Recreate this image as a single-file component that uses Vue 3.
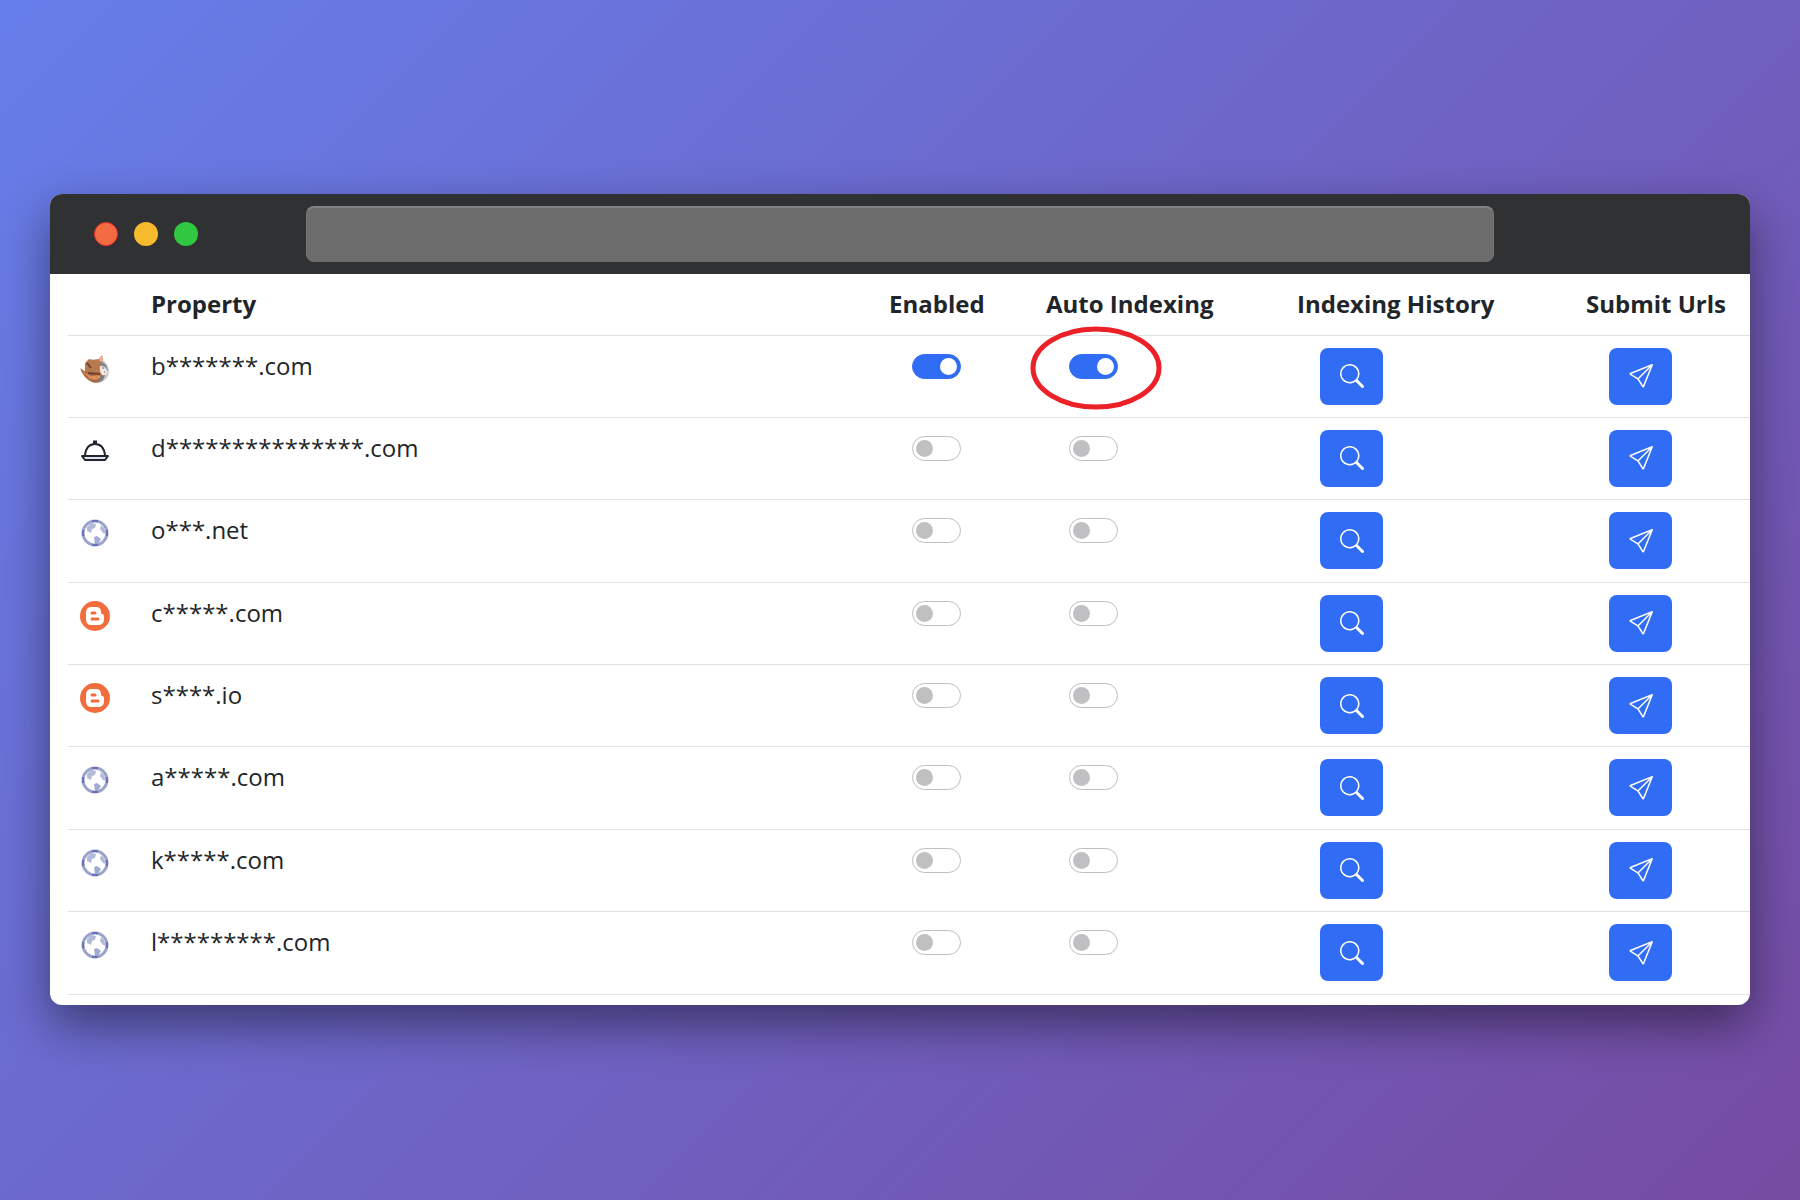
<template>
    <main class="page">
        <section class="window">
            <header class="titlebar">
                <div class="dots">
                    <span class="dot red"></span>
                    <span class="dot yellow"></span>
                    <span class="dot green"></span>
                </div>
                <input class="address" type="text" aria-label="Address">
            </header>

            <div class="content">
                <table>
                    <colgroup>
                        <col class="col-icon">
                        <col>
                        <col class="col-enabled">
                        <col class="col-auto">
                        <col class="col-history">
                        <col class="col-submit">
                    </colgroup>
                    <thead>
                        <tr>
                            <th></th>
                            <th>Property</th>
                            <th>Enabled</th>
                            <th>Auto Indexing</th>
                            <th>Indexing History</th>
                            <th>Submit Urls</th>
                        </tr>
                    </thead>
                    <tbody>
                        <tr v-for="site in sites" :key="site.name">
                            <td class="icon-cell">
                                <!-- fox -->
                                <svg v-if="site.icon === 'fox'" class="favicon" viewBox="0 0 30 30">
                                    <circle cx="17" cy="17" r="12" fill="#c9cdd3" />
                                    <path d="M5 9 9 5l5 1 5-1 3-4 1 5-2 5 2 9-3 8-7 0-7-5-5-6 4 1z" fill="#b87a4c" />
                                    <path d="M0 14q8 7 20 6l6-1-3 7q-5 4-11 2Q4 25 0 14z" fill="#a8683f" />
                                    <path d="m2 17 9 5 9-1-3 5-7-1z" fill="#d98b58" />
                                    <path d="m7 9 4 5M8 19l12 1" fill="none" stroke="#6f4038" stroke-width="2" />
                                    <path d="m19 6 3-5 1 6 4 4-4-1z" fill="#e9b592" />
                                    <path d="m21 7 5 4 2 6-3-4-5-2z" fill="#7b8794" />
                                    <path d="M20 12q6 0 7 6-1 5-5 3-3-4-2-9z" fill="#e6eaed" />
                                    <path d="m20 23 5-2-3 5-5 2z" fill="#76808a" />
                                    <path d="M22 14h2M24 18h1M13 24h2M18 23h2" stroke="#e39a68" stroke-width="2" />
                                </svg>
                                <!-- serving dish -->
                                <svg v-else-if="site.icon === 'dish'" class="favicon" viewBox="0 0 30 30" fill="none" stroke="#20242d" stroke-width="2">
                                    <path d="M5 19C6 11 10 8 15 8s9 3 10 11" />
                                    <path d="M2 20h26l-3 4H5z" fill="#dfe3ee" stroke-linejoin="round" />
                                    <path d="M2 20h26" stroke-width="2" />
                                    <path d="M13 6h4M15 5v3" stroke-width="3" />
                                </svg>
                                <!-- globe -->
                                <svg v-else-if="site.icon === 'globe'" class="favicon" viewBox="0 0 30 30">
                                    <circle cx="15" cy="15" r="12" fill="#fff" />
                                    <path d="m7 9 4-4 5 1-1 4-3 1-1 4-4-2z" fill="#b3bad8" />
                                    <path d="m21 7 3 3 2 6-3-1-3-4z" fill="#b3bad8" />
                                    <path d="m14 19 3-1 4 3-3 5h-3z" fill="#a3abd2" />
                                    <circle cx="15" cy="15" r="12" fill="none" stroke="#9aa4cb" stroke-width="3" />
                                    <path d="M12 3h6M12 27h6M3 12v6M27 12v6" stroke="#6f70b9" stroke-width="2" />
                                </svg>
                                <!-- blogger -->
                                <svg v-else class="favicon" viewBox="0 0 30 30">
                                    <circle cx="15" cy="15" r="15" fill="#f26d3d" />
                                    <path d="M11 6h5q5 0 5 5 0 2 1 2 2 0 2 2v3q0 6-6 6h-7q-5 0-5-6v-6q0-6 5-6z" fill="#fff" />
                                    <path d="M12 12h3M12 18h6" stroke="#f26d3d" stroke-width="3" stroke-linecap="round" />
                                </svg>
                            </td>
                            <td>{{ site.name }}</td>
                            <td class="toggle-cell">
                                <input v-model="site.enabled" class="switch" type="checkbox" :aria-label="'Enabled ' + site.name">
                            </td>
                            <td class="toggle-cell">
                                <span class="switch-wrap">
                                    <input v-model="site.auto" class="switch" type="checkbox" :aria-label="'Auto Indexing ' + site.name">
                                    <svg v-if="site.marked" class="marker" viewBox="0 0 132 84">
                                        <ellipse cx="66" cy="42" rx="63" ry="39" />
                                    </svg>
                                </span>
                            </td>
                            <td class="button-cell">
                                <button type="button" :aria-label="'Indexing History ' + site.name">
                                    <svg viewBox="0 0 16 16" fill="currentColor">
                                        <path d="M11.742 10.344a6.5 6.5 0 1 0-1.397 1.398h-.001q.044.06.098.115l3.85 3.85a1 1 0 0 0 1.415-1.414l-3.85-3.85a1 1 0 0 0-.115-.1zM12 6.5a5.5 5.5 0 1 1-11 0 5.5 5.5 0 0 1 11 0" />
                                    </svg>
                                </button>
                            </td>
                            <td class="button-cell">
                                <button type="button" :aria-label="'Submit Urls ' + site.name">
                                    <svg viewBox="0 0 16 16" fill="currentColor">
                                        <path d="M15.854.146a.5.5 0 0 1 .11.54l-5.819 14.547a.75.75 0 0 1-1.329.124l-3.178-4.995L.643 7.184a.75.75 0 0 1 .124-1.33L15.314.037a.5.5 0 0 1 .54.11ZM6.636 10.07l2.761 4.338L14.13 2.576zm6.787-8.201L1.591 6.602l4.339 2.76z" />
                                    </svg>
                                </button>
                            </td>
                        </tr>
                    </tbody>
                </table>
            </div>
        </section>
    </main>
</template>

<script setup>
    import { ref } from 'vue';

    const sites = ref([
        { name: 'b*******.com', icon: 'fox', enabled: true, auto: true, marked: true },
        { name: 'd***************.com', icon: 'dish', enabled: false, auto: false },
        { name: 'o***.net', icon: 'globe', enabled: false, auto: false },
        { name: 'c*****.com', icon: 'blogger', enabled: false, auto: false },
        { name: 's****.io', icon: 'blogger', enabled: false, auto: false },
        { name: 'a*****.com', icon: 'globe', enabled: false, auto: false },
        { name: 'k*****.com', icon: 'globe', enabled: false, auto: false },
        { name: 'l*********.com', icon: 'globe', enabled: false, auto: false },
    ]);
</script>

<style>
    body {
        margin: 0;
    }
</style>

<style scoped>
    * {
        box-sizing: border-box;
    }

    .page {
        min-height: 100vh;
        padding: 48px 50px 50px;
        display: flex;
        flex-direction: column;
        justify-content: center;
        background: linear-gradient(135deg, #667eea 0%, #764ba2 100%);
        font-family: "Open Sans", sans-serif;
        font-size: 24px;
        line-height: 36px;
        color: #212529;
    }

    .window {
        border-radius: 12px;
        overflow: hidden;
        background: #fff;
        box-shadow: 0 20px 48px rgba(0, 0, 0, 0.45);
    }

    .titlebar {
        height: 80px;
        display: grid;
        grid-template-columns: 256px 1fr 256px;
        align-items: center;
        background: #303133;
    }

    .dots {
        display: flex;
        gap: 16px;
        padding-left: 44px;
    }

    .dot {
        width: 24px;
        height: 24px;
        border-radius: 50%;
    }

    .red {
        background: #f26b43;
        border: 1px solid #ee2b24;
    }

    .yellow {
        background: #f8ba2d;
    }

    .green {
        background: #2fc840;
    }

    .address {
        width: 100%;
        height: 56px;
        padding: 0 16px;
        border: 1px solid #777;
        border-top: 2px solid #838383;
        border-bottom-color: #6d6d6d;
        border-radius: 8px;
        background: #6d6d6d;
        color: #fff;
        font: inherit;
    }

    .content {
        padding: 0 0 10px 18px;
    }

    table {
        width: 100%;
        height: 721px; /* 行高平均分配 */
        table-layout: fixed;
        border-collapse: separate;
        border-spacing: 0;
    }

    .col-icon {
        width: 72px;
    }

    .col-enabled {
        width: 157px;
    }

    .col-auto {
        width: 251px;
    }

    .col-history {
        width: 289px;
    }

    .col-submit {
        width: 175px;
    }

    thead tr {
        height: 62px;
    }

    th,
    td {
        padding: 12px 0 12px 11px;
        border-bottom: 1px solid #dee2e6;
        text-align: left;
        vertical-align: top;
        white-space: nowrap;
    }

    td {
        height: 82px;
        padding-bottom: 0;
    }

    .icon-cell {
        padding-left: 12px;
    }

    .favicon {
        display: block;
        width: 30px;
        height: 30px;
        margin-top: 6px;
    }

    .toggle-cell,
    .button-cell {
        padding-left: 34px;
    }

    .toggle-cell {
        padding-top: 18px;
    }

    .switch-wrap {
        position: relative;
        display: block;
        width: 49px;
    }

    .switch {
        appearance: none;
        display: block;
        width: 49px;
        height: 25px;
        margin: 0;
        padding: 3px;
        border: 1px solid #bfbfbf;
        border-radius: 13px;
        background: #fff;
    }

    .switch::before {
        content: "";
        display: block;
        width: 17px;
        height: 17px;
        border-radius: 50%;
        background: #c0c0c2;
    }

    .switch:checked {
        border-color: #316cf4;
        background: #316cf4;
    }

    .switch:checked::before {
        margin-left: auto;
        background: #fff;
    }

    /* 红色标记圈 */
    .marker {
        position: absolute;
        left: -39px;
        top: -28px;
        width: 132px;
        height: 84px;
        fill: none;
        stroke: #ec2127;
        stroke-width: 5px;
        pointer-events: none;
    }

    button {
        display: flex;
        align-items: center;
        justify-content: center;
        width: 63px;
        height: 57px;
        padding: 0;
        border: 0;
        border-radius: 8px;
        background: #316cf4;
        color: #fff;
        cursor: pointer;
    }

    button svg {
        width: 24px;
        height: 24px;
    }
</style>
